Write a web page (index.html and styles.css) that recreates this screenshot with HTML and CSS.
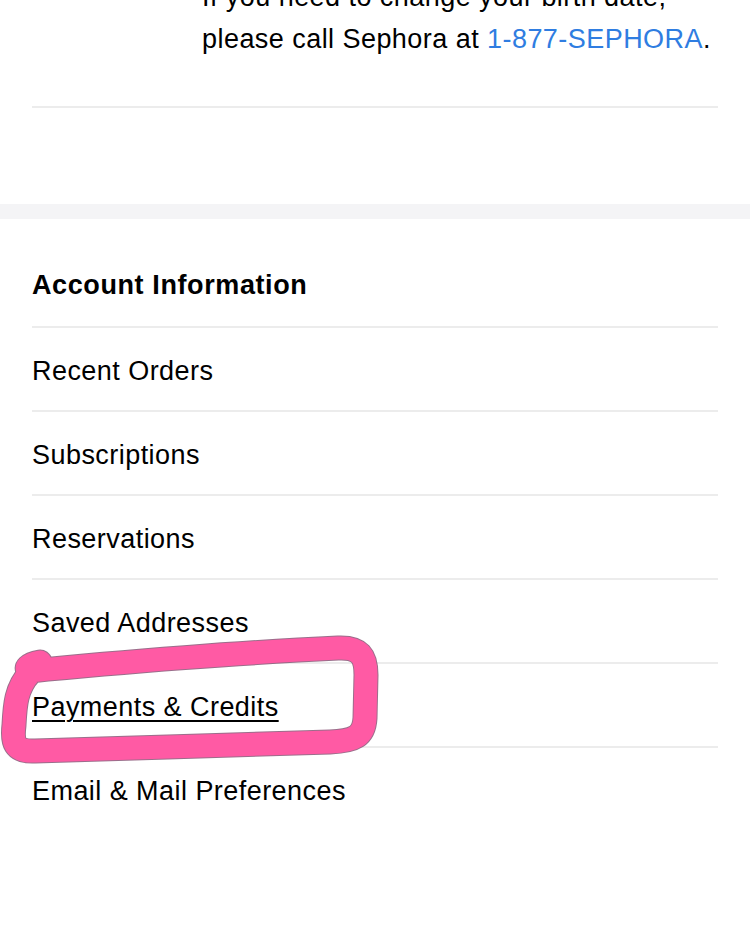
FILE: index.html
```html
<!DOCTYPE html>
<html>
<head>
<meta charset="utf-8">
<link rel="stylesheet" href="styles.css">
</head>
<body>
<div class="page">
  <section class="top">
    <p class="note">If you need to change your birth date,<br>please call Sephora at <a class="phone" href="#">1-877-SEPHORA</a>.</p>
  </section>
  <div class="band"></div>
  <section class="account">
    <h2 class="heading">Account Information</h2>
    <ul class="list">
      <li class="row">Recent Orders</li>
      <li class="row">Subscriptions</li>
      <li class="row">Reservations</li>
      <li class="row">Saved Addresses</li>
      <li class="row"><span class="active">Payments &amp; Credits</span></li>
      <li class="row last">Email &amp; Mail Preferences</li>
    </ul>
  </section>
  <svg class="scribble" width="750" height="938" viewBox="0 0 750 938">
    <path d="M40 662 C 28 664, 24 669, 30 671 C 120 662, 250 652, 338 648 C 360 647, 366 656, 366 675 L 365 718 C 364 736, 355 741, 330 742 C 250 745, 120 748, 35 751 C 14 752, 12 742, 14 725 C 15 705, 16 688, 30 673"
      fill="none" stroke="#7a3d64" stroke-width="25" stroke-linecap="round" stroke-linejoin="round" opacity="0.75"/>
    <path d="M40 662 C 28 664, 24 669, 30 671 C 120 662, 250 652, 338 648 C 360 647, 366 656, 366 675 L 365 718 C 364 736, 355 741, 330 742 C 250 745, 120 748, 35 751 C 14 752, 12 742, 14 725 C 15 705, 16 688, 30 673"
      fill="none" stroke="#ff5aa4" stroke-width="23" stroke-linecap="round" stroke-linejoin="round"/>
  </svg>
</div>
</body>
</html>
```
FILE: styles.css
```css
html, body {
  margin: 0;
  padding: 0;
  background: #ffffff;
}
.page {
  position: relative;
  width: 750px;
  height: 938px;
  overflow: hidden;
  font-family: "Liberation Sans", Arial, sans-serif;
  color: #000;
  letter-spacing: 0.45px;
}
.top {
  margin: 0 32px;
  border-bottom: 2px solid #ececec;
}
.note {
  margin: -24px 0 0 170px;
  padding-bottom: 46px;
  font-size: 27px;
  line-height: 42px;
}
.phone {
  color: #2f7de1;
  text-decoration: none;
}
.band {
  margin-top: 96px;
  height: 15px;
  background: #f4f4f6;
}
.account {
  padding: 0 32px;
}
.heading {
  margin: 0;
  padding-top: 45px;
  padding-bottom: 20px;
  font-size: 27px;
  line-height: 42px;
  font-weight: bold;
  letter-spacing: 0.6px;
  border-bottom: 2px solid #ececec;
}
.list {
  list-style: none;
  margin: 0;
  padding: 0;
}
.row {
  height: 78px;
  padding-top: 4px;
  line-height: 78px;
  font-size: 27px;
  border-bottom: 2px solid #ececec;
}
.row.last {
  border-bottom: none;
}
.active {
  text-decoration: underline;
  text-underline-offset: 4px;
  text-decoration-thickness: 2px;
}
.scribble {
  position: absolute;
  top: 0;
  left: 0;
  pointer-events: none;
}
```
